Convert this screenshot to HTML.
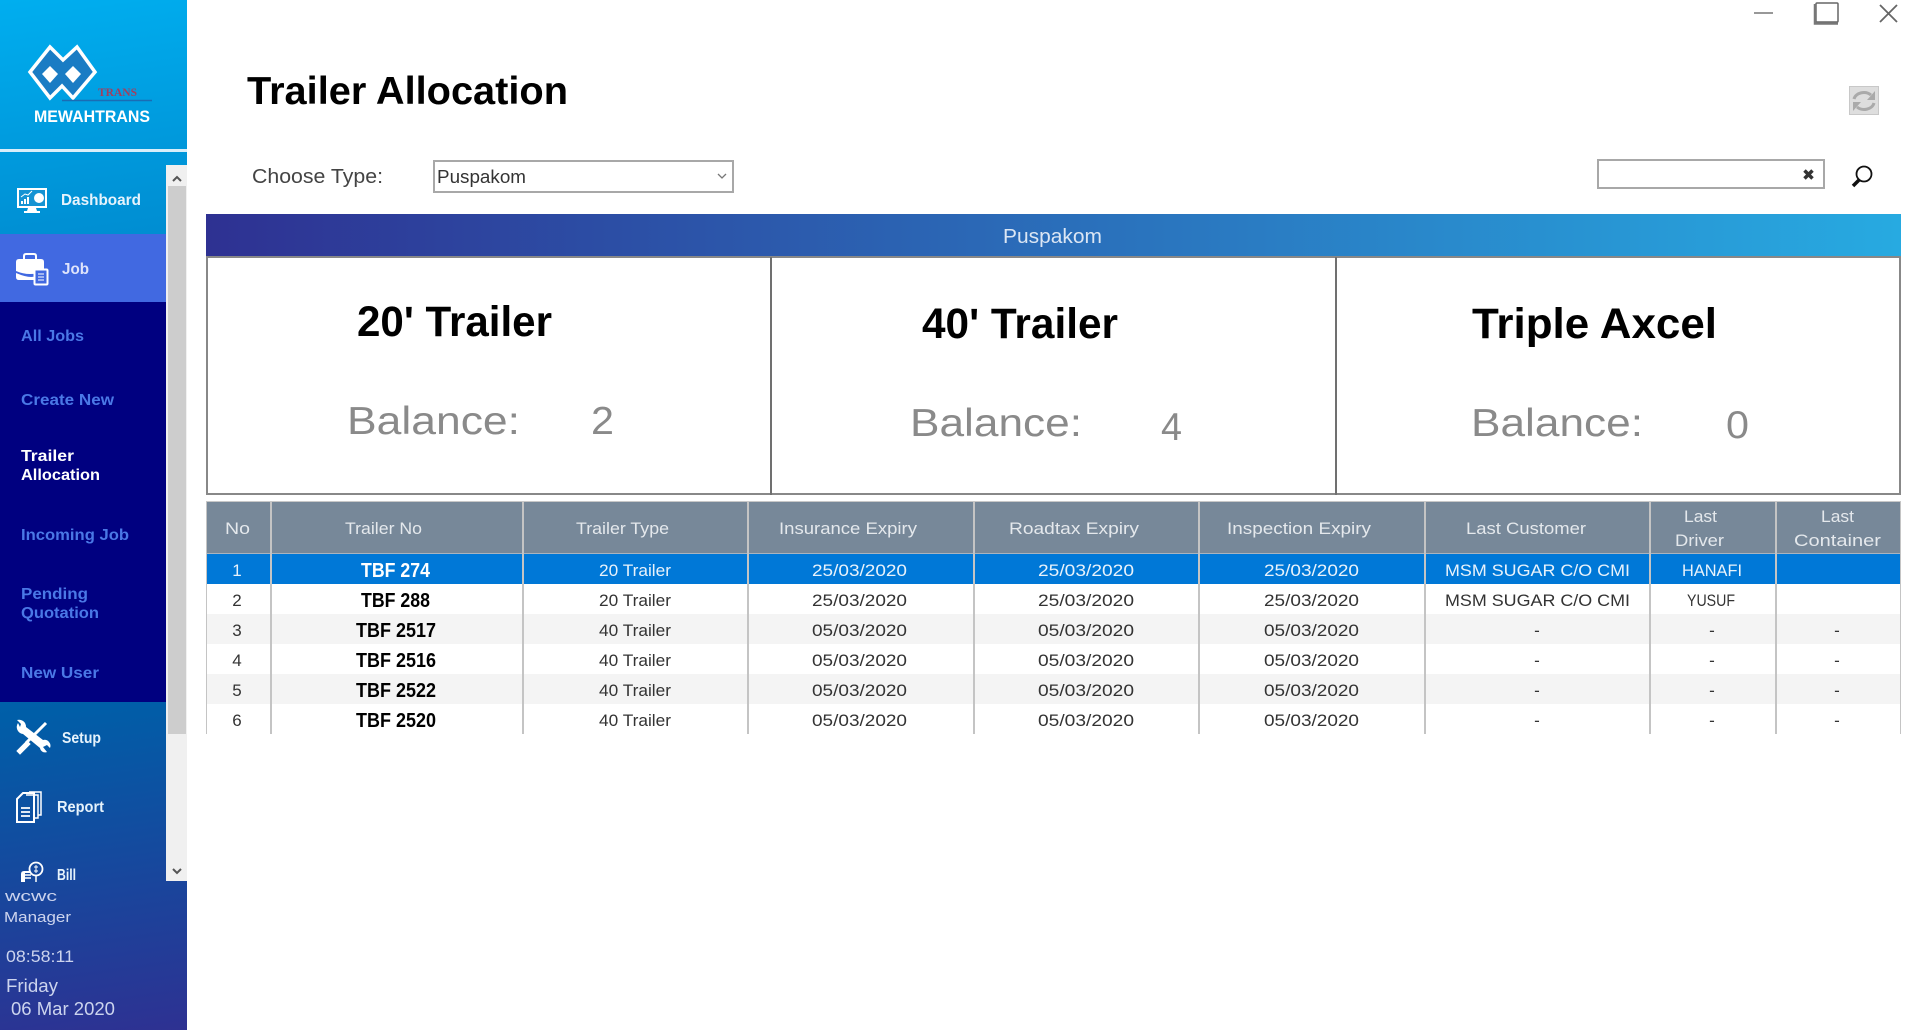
<!DOCTYPE html>
<html><head><meta charset="utf-8"><title>Trailer Allocation</title>
<style>
html,body{margin:0;padding:0;width:1920px;height:1030px;overflow:hidden;background:#fff}
.b{position:absolute;box-sizing:border-box}
svg{position:absolute;left:0;top:0}
text{font-family:"Liberation Sans",sans-serif}
.h{font-size:17px;fill:#e4e8ec}
.c{font-size:17px;fill:#333}
.s{font-size:17px;fill:#e8f2fb}
.t{font-size:20px;font-weight:700;fill:#000}
.m{font-size:15.5px;font-weight:700;fill:#4a78e6}
.n{font-size:15.5px;font-weight:700;fill:#e6f3fc}
.f{fill:#ccd4ee}
.g{font-size:39px;fill:#8a8a8a}
.k{font-size:43px;font-weight:700;fill:#000}
#w{position:absolute;left:0;top:0;width:1920px;height:1030px;filter:blur(.3px)}
</style></head><body><div id="w">
<!-- sidebar -->
<div class="b" style="left:0;top:0;width:187px;height:1030px;background:linear-gradient(172deg,#00aeef 0%,#0090d4 22%,#005ea8 68%,#2e3192 100%)"></div>
<div class="b" style="left:0;top:149px;width:187px;height:3px;background:#d8eefa"></div>
<div class="b" style="left:0;top:234px;width:166px;height:68px;background:#4169e1"></div>
<div class="b" style="left:0;top:302px;width:166px;height:400px;background:#000080"></div>
<div class="b" style="left:166px;top:165px;width:21px;height:716px;background:#f0f0f0"></div>
<div class="b" style="left:168px;top:186px;width:18px;height:548px;background:#cdcdcd"></div>
<!-- panel -->
<div class="b" style="left:206px;top:214px;width:1695px;height:43px;background:linear-gradient(90deg,#2e3192,#27aae1)"></div>
<div class="b" style="left:206px;top:256px;width:1695px;height:239px;border:2px solid #888"></div>
<div class="b" style="left:770px;top:257px;width:2px;height:238px;background:#707070"></div>
<div class="b" style="left:1335px;top:257px;width:2px;height:238px;background:#707070"></div>
<!-- controls -->
<div class="b" style="left:433px;top:160px;width:301px;height:33px;border:2px solid #a8a8a8;background:#fff"></div>
<div class="b" style="left:1597px;top:159px;width:228px;height:30px;border:2px solid #a8a8a8;background:#fff"></div>
<div class="b" style="left:1849px;top:86px;width:30px;height:29px;border:1px solid #c8c8c8;background:#dedede"></div>
<!-- table backgrounds -->
<div class="b" style="left:206px;top:501px;width:1695px;height:52px;background:#778899;border-top:1px solid #c8c8c8"></div>
<div class="b" style="left:206px;top:553px;width:1695px;height:31px;background:#0078d7;border-top:1px solid #aab4bf"></div>
<div class="b" style="left:206px;top:614px;width:1695px;height:30px;background:#f4f4f4"></div>
<div class="b" style="left:206px;top:674px;width:1695px;height:30px;background:#f4f4f4"></div>
<div class="b" style="left:206px;top:502px;width:1695px;height:232px;border-left:1px solid #c4c4c4;border-right:1px solid #c4c4c4"></div>
<div class="b" style="left:270px;top:502px;width:2px;height:232px;background:#c4c4c4"></div>
<div class="b" style="left:522px;top:502px;width:2px;height:232px;background:#c4c4c4"></div>
<div class="b" style="left:747px;top:502px;width:2px;height:232px;background:#c4c4c4"></div>
<div class="b" style="left:973px;top:502px;width:2px;height:232px;background:#c4c4c4"></div>
<div class="b" style="left:1198px;top:502px;width:2px;height:232px;background:#c4c4c4"></div>
<div class="b" style="left:1424px;top:502px;width:2px;height:232px;background:#c4c4c4"></div>
<div class="b" style="left:1649px;top:502px;width:2px;height:232px;background:#c4c4c4"></div>
<div class="b" style="left:1775px;top:502px;width:2px;height:232px;background:#c4c4c4"></div>

<svg width="1920" height="1030" viewBox="0 0 1920 1030" xmlns="http://www.w3.org/2000/svg">
<!-- logo -->
<path d="M50 47L63 60L77 47L95 72L73 98L62 86L50 98L30 72Z" fill="#1a7cc4" stroke="#fff" stroke-width="3.500" stroke-linejoin="miter"/>
<path d="M50 66L58 74L50 83L42 74Z" fill="#fff"/>
<path d="M73 66L81 74L73 83L65 74Z" fill="#fff"/>
<path d="M62 100.500H152" stroke="#1a6cb4" stroke-width="1.500"/>
<text x="98" y="96" textLength="39" lengthAdjust="spacingAndGlyphs" style="font-family:'Liberation Serif',serif;font-size:12px;font-weight:700;fill:#a04060">TRANS</text>
<text x="34" y="122" textLength="116" lengthAdjust="spacingAndGlyphs" style="font-size:17px;font-weight:700;fill:#fff">MEWAHTRANS</text>

<!-- dashboard icon -->
<rect x="17" y="188" width="30" height="20" fill="#fff"/>
<rect x="19" y="190" width="26" height="16" fill="#1593d3"/>
<path d="M28 208h8l1 3h3v2H24v-2h3z" fill="#fff"/>
<path d="M21 204v-3h2v3zM24 204v-5h2v5zM27 204v-7h2v7z" fill="#fff"/>
<circle cx="39" cy="198" r="5" fill="#fff"/>
<path d="M21 197l4-3 3 1 4-4" stroke="#fff" fill="none"/>
<!-- job icon -->
<path d="M24 259v-3q0-2 2-2h8q2 0 2 2v3" fill="none" stroke="#fff" stroke-width="2"/>
<path d="M16 262q0-3 3-3h22q3 0 3 3v9q-14 6-28 0z" fill="#fff"/>
<path d="M16 273q14 6 20 3v4H19q-3 0-3-3z" fill="#fff"/>
<rect x="34.500" y="269.500" width="13" height="15" rx="1" fill="#4169e1" stroke="#fff" stroke-width="2"/>
<path d="M38 274h6M38 277h6M38 280h6" stroke="#fff"/>
<!-- setup icon -->
<path d="M46 723L26 743" stroke="#fff" stroke-width="3"/>
<path d="M20 754l-3-3 10-10 3 3z" fill="#fff" stroke="#fff"/>
<path d="M18 723a7 7 0 0 0 5 11l17 14a5 5 0 0 0 7 4l-4-5 4-2 3 3a6 6 0 0 0-7-8l-17-13a7 7 0 0 0-9-7l4 4-1 3z" fill="#fff"/>
<!-- report icon -->
<path d="M29 792h12v23h-3" fill="none" stroke="#fff" stroke-width="1.500"/>
<path d="M26 795h12v23h-3" fill="none" stroke="#fff" stroke-width="1.500"/>
<path d="M17 799l6-6h11v29H17z" fill="none" stroke="#fff" stroke-width="2"/>
<path d="M21 808h9M21 812h9M21 816h9" stroke="#fff" stroke-width="1.800"/>
<!-- bill icon -->
<circle cx="36" cy="869" r="6.500" fill="none" stroke="#fff" stroke-width="1.800"/>
<path d="M36 876v6" stroke="#fff" stroke-width="1.500"/>
<path d="M34 867h4M34 871h4M36 865v8" stroke="#fff"/>
<path d="M21 882v-8q0-3 3-3h6v2h-5v9z" fill="#fff"/>
<path d="M25 875h6M25 878h6" stroke="#fff" stroke-width="1.500"/>
<!-- scrollbar arrows -->
<path d="M173 181l4-4 4 4" fill="none" stroke="#555" stroke-width="2"/>
<path d="M173 869l4 4 4-4" fill="none" stroke="#555" stroke-width="2"/>

<!-- sidebar text -->
<text class="n" x="61" y="205" textLength="80" lengthAdjust="spacingAndGlyphs">Dashboard</text>
<text class="n" x="62" y="274" textLength="27" lengthAdjust="spacingAndGlyphs" style="fill:#dfe4fb">Job</text>
<text class="m" x="21" y="341" textLength="63" lengthAdjust="spacingAndGlyphs">All Jobs</text>
<text class="m" x="21" y="405" textLength="93" lengthAdjust="spacingAndGlyphs">Create New</text>
<text class="m" x="21" y="461" textLength="53" lengthAdjust="spacingAndGlyphs" style="fill:#fff">Trailer</text>
<text class="m" x="21" y="480" textLength="79" lengthAdjust="spacingAndGlyphs" style="fill:#fff">Allocation</text>
<text class="m" x="21" y="540" textLength="108" lengthAdjust="spacingAndGlyphs">Incoming Job</text>
<text class="m" x="21" y="599" textLength="67" lengthAdjust="spacingAndGlyphs">Pending</text>
<text class="m" x="21" y="618" textLength="78" lengthAdjust="spacingAndGlyphs">Quotation</text>
<text class="m" x="21" y="678" textLength="78" lengthAdjust="spacingAndGlyphs">New User</text>
<text class="n" x="62" y="743" textLength="39" lengthAdjust="spacingAndGlyphs">Setup</text>
<text class="n" x="57" y="812" textLength="47" lengthAdjust="spacingAndGlyphs">Report</text>
<text class="n" x="57" y="880" textLength="19" lengthAdjust="spacingAndGlyphs">Bill</text>
<text class="f" x="5" y="901" textLength="52" lengthAdjust="spacingAndGlyphs" style="font-size:15px">wcwc</text>
<text class="f" x="4" y="922" textLength="67" lengthAdjust="spacingAndGlyphs" style="font-size:15px">Manager</text>
<text class="f" x="6" y="962" textLength="68" lengthAdjust="spacingAndGlyphs" style="font-size:17px">08:58:11</text>
<text class="f" x="6" y="992" textLength="52" lengthAdjust="spacingAndGlyphs" style="font-size:18px">Friday</text>
<text class="f" x="11" y="1015" textLength="104" lengthAdjust="spacingAndGlyphs" style="font-size:18px">06 Mar 2020</text>

<!-- window controls -->
<path d="M1754 13h19" stroke="#777" stroke-width="1.500"/>
<rect x="1816" y="3" width="22" height="19" rx="1" fill="none" stroke="#666" stroke-width="1.500"/>
<path d="M1815 4v19.500h23" fill="none" stroke="#777" stroke-width="2.500"/>
<path d="M1880 5l17 17M1897 5l-17 17" stroke="#666" stroke-width="1.800"/>

<!-- refresh -->
<path d="M1854 99a10 8 0 0 1 17-4" fill="none" stroke="#aaa" stroke-width="3"/>
<path d="M1875 91v9h-8z" fill="#aaa"/>
<path d="M1874 103a10 8 0 0 1-17 4" fill="none" stroke="#aaa" stroke-width="3"/>
<path d="M1853 111v-9h8z" fill="#aaa"/>

<!-- search -->
<path d="M1804.500 170.500l8 8M1812.500 170.500l-8 8" stroke="#333" stroke-width="3.500"/>
<circle cx="1864" cy="174" r="7.500" fill="none" stroke="#111" stroke-width="1.800"/>
<path d="M1859 180l-6 6" stroke="#111" stroke-width="3.500"/>
<path d="M718 174l4 4 4-4" fill="none" stroke="#777" stroke-width="1.300"/>

<!-- heading -->
<text x="247" y="104" textLength="321" lengthAdjust="spacingAndGlyphs" style="font-size:39px;font-weight:700;fill:#000">Trailer Allocation</text>
<text x="252" y="183" textLength="131" lengthAdjust="spacingAndGlyphs" style="font-size:20px;fill:#444">Choose Type:</text>
<text x="437" y="183" textLength="89" lengthAdjust="spacingAndGlyphs" style="font-size:18px;fill:#333">Puspakom</text>
<text x="1003" y="243" textLength="99" lengthAdjust="spacingAndGlyphs" style="font-size:20px;fill:#dbe6f4">Puspakom</text>

<!-- cards -->
<text class="k" x="357" y="336" textLength="195" lengthAdjust="spacingAndGlyphs">20' Trailer</text>
<text class="g" x="347" y="434" textLength="173" lengthAdjust="spacingAndGlyphs">Balance:</text>
<text class="g" x="591" y="434" textLength="23" lengthAdjust="spacingAndGlyphs">2</text>
<text class="k" x="922" y="338" textLength="196" lengthAdjust="spacingAndGlyphs">40' Trailer</text>
<text class="g" x="910" y="436" textLength="172" lengthAdjust="spacingAndGlyphs">Balance:</text>
<text class="g" x="1161" y="440" textLength="21" lengthAdjust="spacingAndGlyphs">4</text>
<text class="k" x="1472" y="338" textLength="245" lengthAdjust="spacingAndGlyphs">Triple Axcel</text>
<text class="g" x="1471" y="436" textLength="172" lengthAdjust="spacingAndGlyphs">Balance:</text>
<text class="g" x="1726" y="438" textLength="23" lengthAdjust="spacingAndGlyphs">0</text>

<!-- table header -->
<text class="h" x="225" y="534" textLength="25" lengthAdjust="spacingAndGlyphs">No</text>
<text class="h" x="345" y="534" textLength="77" lengthAdjust="spacingAndGlyphs">Trailer No</text>
<text class="h" x="576" y="534" textLength="93" lengthAdjust="spacingAndGlyphs">Trailer Type</text>
<text class="h" x="779" y="534" textLength="138" lengthAdjust="spacingAndGlyphs">Insurance Expiry</text>
<text class="h" x="1009" y="534" textLength="130" lengthAdjust="spacingAndGlyphs">Roadtax Expiry</text>
<text class="h" x="1227" y="534" textLength="144" lengthAdjust="spacingAndGlyphs">Inspection Expiry</text>
<text class="h" x="1466" y="534" textLength="120" lengthAdjust="spacingAndGlyphs">Last Customer</text>
<text class="h" x="1684" y="522" textLength="33" lengthAdjust="spacingAndGlyphs">Last</text>
<text class="h" x="1675" y="546" textLength="49" lengthAdjust="spacingAndGlyphs">Driver</text>
<text class="h" x="1821" y="522" textLength="33" lengthAdjust="spacingAndGlyphs">Last</text>
<text class="h" x="1794" y="546" textLength="87" lengthAdjust="spacingAndGlyphs">Container</text>

<!-- row 1 -->
<text class="s" x="237" y="576" text-anchor="middle">1</text>
<text class="t" x="361" y="577" textLength="69" lengthAdjust="spacingAndGlyphs" style="fill:#fff">TBF 274</text>
<text class="s" x="599" y="576" textLength="72" lengthAdjust="spacingAndGlyphs">20 Trailer</text>
<text class="s" x="812" y="576" textLength="95" lengthAdjust="spacingAndGlyphs">25/03/2020</text>
<text class="s" x="1038" y="576" textLength="96" lengthAdjust="spacingAndGlyphs">25/03/2020</text>
<text class="s" x="1264" y="576" textLength="95" lengthAdjust="spacingAndGlyphs">25/03/2020</text>
<text class="s" x="1445" y="576" textLength="185" lengthAdjust="spacingAndGlyphs">MSM SUGAR C/O CMI</text>
<text class="s" x="1682" y="576" textLength="60" lengthAdjust="spacingAndGlyphs">HANAFI</text>
<!-- row 2 -->
<text class="c" x="237" y="606" text-anchor="middle">2</text>
<text class="t" x="361" y="607" textLength="69" lengthAdjust="spacingAndGlyphs">TBF 288</text>
<text class="c" x="599" y="606" textLength="72" lengthAdjust="spacingAndGlyphs">20 Trailer</text>
<text class="c" x="812" y="606" textLength="95" lengthAdjust="spacingAndGlyphs">25/03/2020</text>
<text class="c" x="1038" y="606" textLength="96" lengthAdjust="spacingAndGlyphs">25/03/2020</text>
<text class="c" x="1264" y="606" textLength="95" lengthAdjust="spacingAndGlyphs">25/03/2020</text>
<text class="c" x="1445" y="606" textLength="185" lengthAdjust="spacingAndGlyphs">MSM SUGAR C/O CMI</text>
<text class="c" x="1687" y="606" textLength="48" lengthAdjust="spacingAndGlyphs">YUSUF</text>
<!-- row 3 -->
<text class="c" x="237" y="636" text-anchor="middle">3</text>
<text class="t" x="356" y="637" textLength="80" lengthAdjust="spacingAndGlyphs">TBF 2517</text>
<text class="c" x="599" y="636" textLength="72" lengthAdjust="spacingAndGlyphs">40 Trailer</text>
<text class="c" x="812" y="636" textLength="95" lengthAdjust="spacingAndGlyphs">05/03/2020</text>
<text class="c" x="1038" y="636" textLength="96" lengthAdjust="spacingAndGlyphs">05/03/2020</text>
<text class="c" x="1264" y="636" textLength="95" lengthAdjust="spacingAndGlyphs">05/03/2020</text>
<text class="c" x="1537" y="636" text-anchor="middle">-</text>
<text class="c" x="1712" y="636" text-anchor="middle">-</text>
<text class="c" x="1837" y="636" text-anchor="middle">-</text>
<!-- row 4 -->
<text class="c" x="237" y="666" text-anchor="middle">4</text>
<text class="t" x="356" y="667" textLength="80" lengthAdjust="spacingAndGlyphs">TBF 2516</text>
<text class="c" x="599" y="666" textLength="72" lengthAdjust="spacingAndGlyphs">40 Trailer</text>
<text class="c" x="812" y="666" textLength="95" lengthAdjust="spacingAndGlyphs">05/03/2020</text>
<text class="c" x="1038" y="666" textLength="96" lengthAdjust="spacingAndGlyphs">05/03/2020</text>
<text class="c" x="1264" y="666" textLength="95" lengthAdjust="spacingAndGlyphs">05/03/2020</text>
<text class="c" x="1537" y="666" text-anchor="middle">-</text>
<text class="c" x="1712" y="666" text-anchor="middle">-</text>
<text class="c" x="1837" y="666" text-anchor="middle">-</text>
<!-- row 5 -->
<text class="c" x="237" y="696" text-anchor="middle">5</text>
<text class="t" x="356" y="697" textLength="80" lengthAdjust="spacingAndGlyphs">TBF 2522</text>
<text class="c" x="599" y="696" textLength="72" lengthAdjust="spacingAndGlyphs">40 Trailer</text>
<text class="c" x="812" y="696" textLength="95" lengthAdjust="spacingAndGlyphs">05/03/2020</text>
<text class="c" x="1038" y="696" textLength="96" lengthAdjust="spacingAndGlyphs">05/03/2020</text>
<text class="c" x="1264" y="696" textLength="95" lengthAdjust="spacingAndGlyphs">05/03/2020</text>
<text class="c" x="1537" y="696" text-anchor="middle">-</text>
<text class="c" x="1712" y="696" text-anchor="middle">-</text>
<text class="c" x="1837" y="696" text-anchor="middle">-</text>
<!-- row 6 -->
<text class="c" x="237" y="726" text-anchor="middle">6</text>
<text class="t" x="356" y="727" textLength="80" lengthAdjust="spacingAndGlyphs">TBF 2520</text>
<text class="c" x="599" y="726" textLength="72" lengthAdjust="spacingAndGlyphs">40 Trailer</text>
<text class="c" x="812" y="726" textLength="95" lengthAdjust="spacingAndGlyphs">05/03/2020</text>
<text class="c" x="1038" y="726" textLength="96" lengthAdjust="spacingAndGlyphs">05/03/2020</text>
<text class="c" x="1264" y="726" textLength="95" lengthAdjust="spacingAndGlyphs">05/03/2020</text>
<text class="c" x="1537" y="726" text-anchor="middle">-</text>
<text class="c" x="1712" y="726" text-anchor="middle">-</text>
<text class="c" x="1837" y="726" text-anchor="middle">-</text>
</svg>
</div></body></html>
